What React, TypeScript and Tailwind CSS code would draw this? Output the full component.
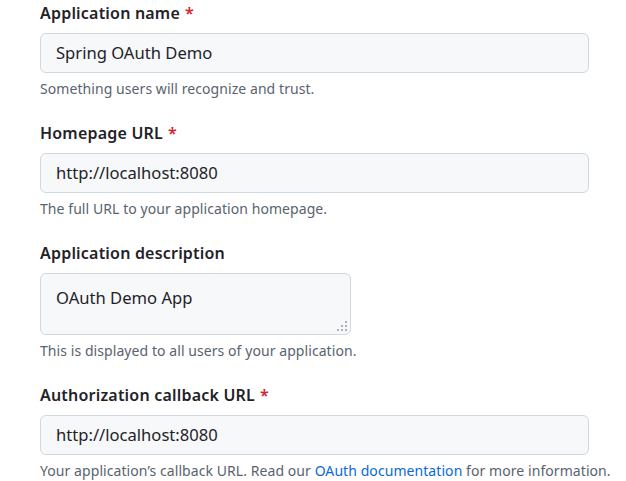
import React from "react";

function Label({ text, required }: { text: string; required?: boolean }) {
  return (
    <div className="text-base leading-6 font-semibold tracking-[0.2px] text-[#1f2328]">
      {text}
      {required && <span className="ml-[5px] text-[#d1242f]">*</span>}
    </div>
  );
}

function Helper({ children }: { children: React.ReactNode }) {
  return <div className="mt-[5px] text-sm leading-[21px] tracking-[0.07px] text-[#59636e]">{children}</div>;
}

function TextInput({ value }: { value: string }) {
  return (
    <div className="mt-[8px] flex h-[40px] w-[549px] items-center rounded-md border border-[#d1d9e0] bg-[#f6f8fa] px-[15px] text-[16.6px] leading-6 text-[#1f2328]">
      {value}
    </div>
  );
}

function Grip() {
  const dots: [number, number][] = [
    [8, 0],
    [4, 4],
    [8, 4],
    [0, 8],
    [4, 8],
    [8, 8],
  ];
  return (
    <svg className="absolute bottom-[3px] right-[3px]" width="10" height="10" viewBox="0 0 10 10">
      {dots.map(([x, y]) => (
        <rect key={`${x}-${y}`} x={x} y={y} width="2" height="2" fill="#aeb3b9" />
      ))}
    </svg>
  );
}

export default function App() {
  return (
    <div className="min-h-[481px] bg-white pl-[40px] pt-[1px]" style={{ fontFamily: '"Noto Sans", sans-serif' }}>
      <div className="flex flex-col gap-[22px]">
        <div>
          <Label text="Application name" required />
          <TextInput value="Spring OAuth Demo" />
          <Helper>Something users will recognize and trust.</Helper>
        </div>
        <div>
          <Label text="Homepage URL" required />
          <TextInput value="http://localhost:8080" />
          <Helper>The full URL to your application homepage.</Helper>
        </div>
        <div>
          <Label text="Application description" />
          <div className="relative mt-[8px] h-[62px] w-[311px] rounded-md border border-[#d1d9e0] bg-[#f6f8fa] px-[15px] pt-[12px] text-[16.6px] leading-6 text-[#1f2328]">
            OAuth Demo App
            <Grip />
          </div>
          <Helper>This is displayed to all users of your application.</Helper>
        </div>
        <div>
          <Label text="Authorization callback URL" required />
          <TextInput value="http://localhost:8080" />
          <Helper>
            Your application’s callback URL. Read our{" "}
            <span className="text-[#0969da]">OAuth documentation</span> for more information.
          </Helper>
        </div>
      </div>
    </div>
  );
}
